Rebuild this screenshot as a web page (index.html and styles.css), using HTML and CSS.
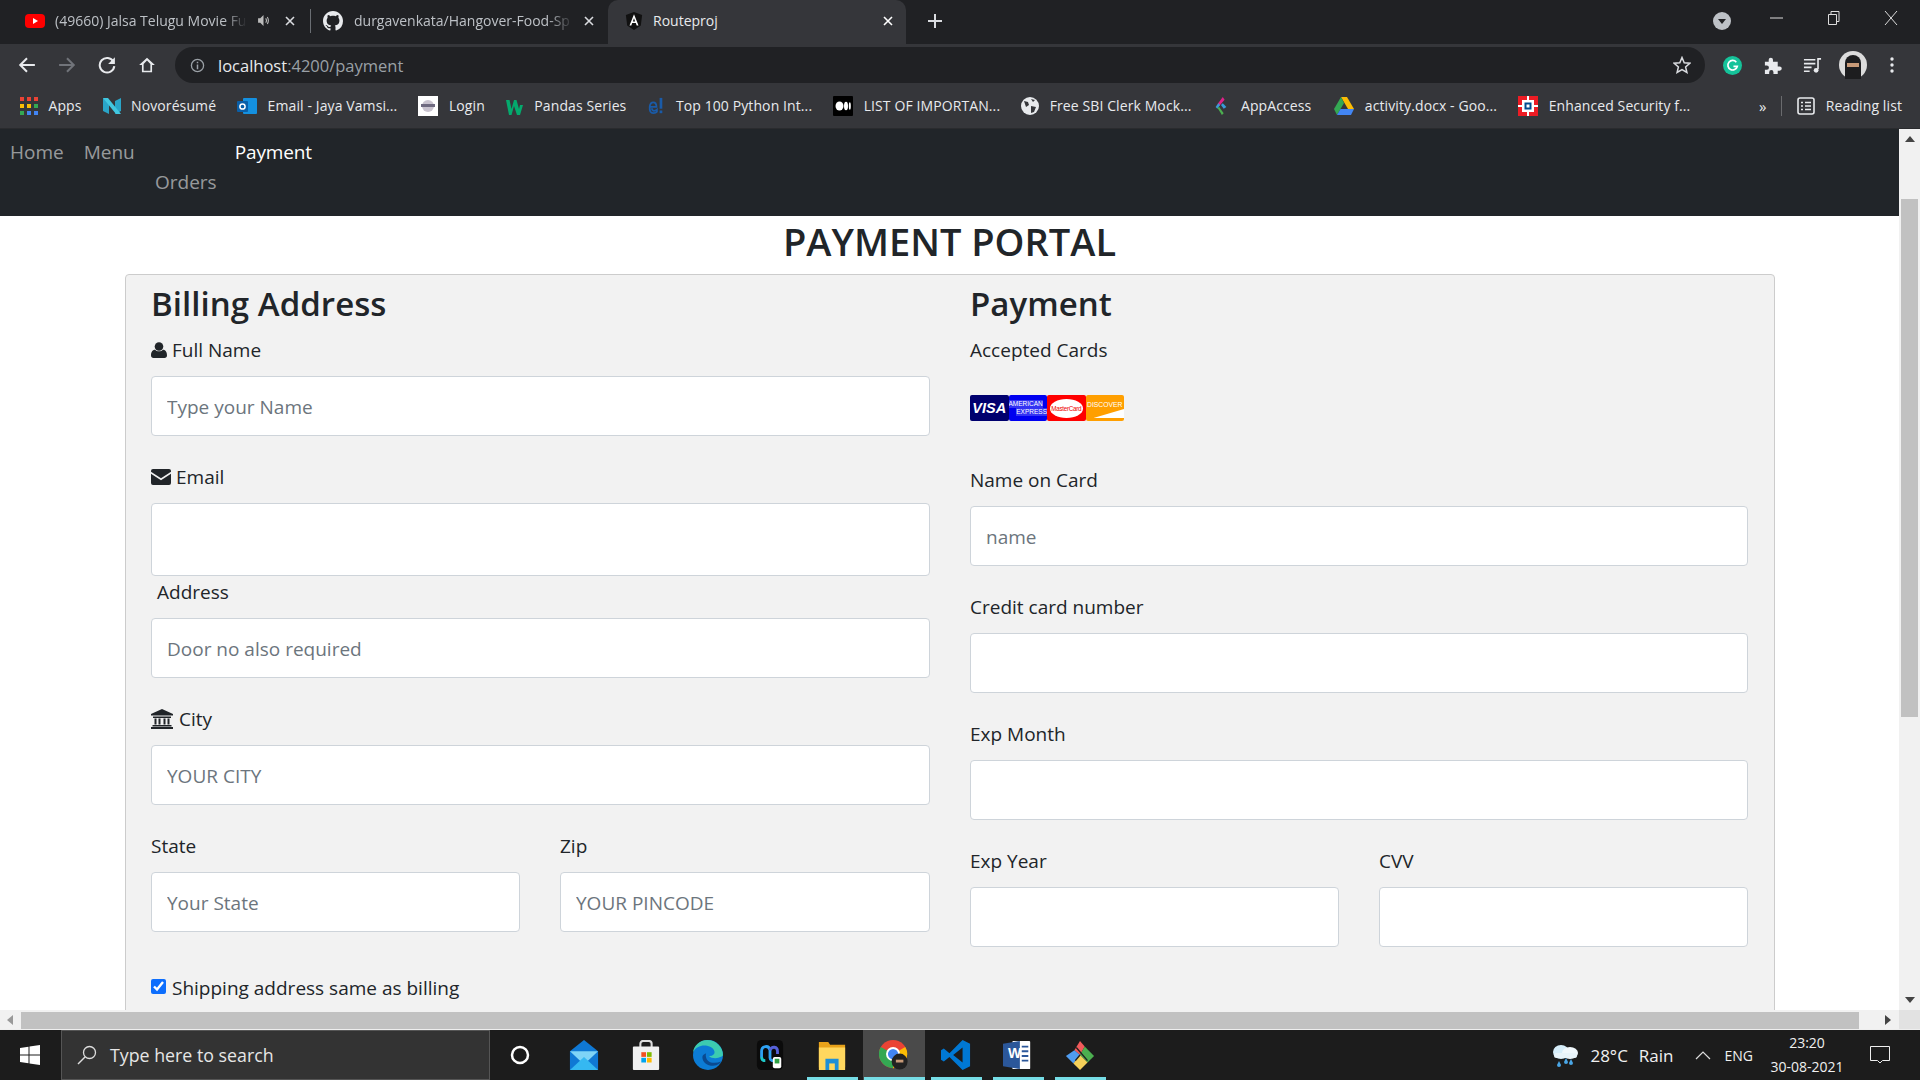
FILE: index.html
```html
<!DOCTYPE html>
<html lang="en">
<head>
<meta charset="utf-8">
<title>Routeproj</title>
<link rel="stylesheet" href="styles.css">
</head>
<body>
<div class="tabstrip">
  <div class="tab tab-yt">
    <svg class="fav" viewBox="0 0 20 20"><rect x="0" y="3" width="20" height="14" rx="4" fill="#f00"/><path d="M8 7l5 3-5 3z" fill="#fff"/></svg>
    <span class="tab-title fade">(49660) Jalsa Telugu Movie Full</span>
    <svg class="speaker" viewBox="0 0 12 12"><path d="M1 4h2l3-3v10L3 8H1z" fill="#bbb"/><path d="M8 4q1.500 2 0 4M9.500 2.800q2 3.200 0 6.400" stroke="#bbb" fill="none"/></svg>
    <svg class="close" viewBox="0 0 10 10"><path d="M1 1l8 8M9 1l-8 8" stroke="#dadce0" stroke-width="1.600"/></svg>
  </div>
  <div class="tab-sep"></div>
  <div class="tab tab-gh">
    <svg class="fav" viewBox="0 0 16 16"><path fill="#e8eaed" d="M8 0C3.580 0 0 3.580 0 8c0 3.540 2.290 6.530 5.470 7.590.4.070.55-.17.55-.38 0-.19-.01-.82-.01-1.490-2.010.37-2.530-.49-2.690-.94-.09-.23-.48-.94-.82-1.130-.28-.15-.68-.52-.01-.53.63-.01 1.080.58 1.230.82.720 1.210 1.870.87 2.330.66.070-.52.280-.87.510-1.070-1.780-.2-3.640-.89-3.640-3.950 0-.87.310-1.590.820-2.150-.08-.2-.36-1.020.08-2.120 0 0 .67-.21 2.200.82.640-.18 1.320-.27 2-.27s1.360.09 2 .27c1.530-1.040 2.200-.82 2.200-.82.440 1.100.16 1.920.08 2.120.51.560.82 1.270.82 2.150 0 3.070-1.870 3.750-3.650 3.950.29.250.54.730.54 1.480 0 1.070-.01 1.930-.01 2.200 0 .21.150.46.550.38A8.010 8.010 0 0 0 16 8c0-4.420-3.580-8-8-8z"/></svg>
    <span class="tab-title fade">durgavenkata/Hangover-Food-Sp</span>
    <svg class="close" viewBox="0 0 10 10"><path d="M1 1l8 8M9 1l-8 8" stroke="#dadce0" stroke-width="1.600"/></svg>
  </div>
  <div class="tab tab-active">
    <svg class="fav" viewBox="0 0 20 20"><path d="M10 0L1 3.300l1.400 11.800L10 20l7.600-4.900L19 3.300z" fill="#111"/><path d="M10 2.500L5 15h2l1-2.700h4l1 2.700h2zM8.700 10.500L10 7l1.300 3.500z" fill="#fff"/></svg>
    <span class="tab-title active-title">Routeproj</span>
    <svg class="close" viewBox="0 0 10 10"><path d="M1 1l8 8M9 1l-8 8" stroke="#fff" stroke-width="1.600"/></svg>
  </div>
  <svg class="newtab" viewBox="0 0 14 14"><path d="M7 0v14M0 7h14" stroke="#dadce0" stroke-width="2"/></svg>
  <div class="spacer"></div>
  <svg class="tabsearch" viewBox="0 0 18 18"><circle cx="9" cy="9" r="9" fill="#bdc1c6"/><path d="M5 7h8l-4 5z" fill="#202124"/></svg>
  <div class="winctl">
    <svg viewBox="0 0 14 14"><path d="M0 7h13" stroke="#ddd"/></svg>
    <svg viewBox="0 0 14 14"><path d="M1.500 3.500h8v10h-8zM4 3.500V.5h8v10H9.500" stroke="#ddd" fill="none"/></svg>
    <svg viewBox="0 0 14 14"><path d="M1 0l12 14M13 0L1 14" stroke="#ddd"/></svg>
  </div>
</div>

<div class="toolbar">
  <div class="navbtns">
    <svg viewBox="0 0 16 16"><path d="M15 8H2M8 2L2 8l6 6" stroke="#e8eaed" stroke-width="1.800" fill="none"/></svg>
    <svg viewBox="0 0 16 16"><path d="M1 8h13M8 2l6 6-6 6" stroke="#71747a" stroke-width="1.800" fill="none"/></svg>
    <svg viewBox="0 0 16 16"><path d="M13.700 5A6.500 6.500 0 1 0 14.500 9" stroke="#e8eaed" stroke-width="1.800" fill="none"/><path d="M15 1v6H9z" fill="#e8eaed"/></svg>
    <svg viewBox="0 0 16 16"><path d="M8 1.500L1 8h2.500v6.500h9V8H15zM5 13V7l3-3 3 3v6z" fill="#e8eaed"/></svg>
  </div>
  <div class="omnibox">
    <svg class="info" viewBox="0 0 16 16"><circle cx="8" cy="8" r="6.500" stroke="#9aa0a6" stroke-width="1.400" fill="none"/><path d="M8 7v5M8 4v1.600" stroke="#9aa0a6" stroke-width="1.600"/></svg>
    <span class="url"><span class="host">localhost</span>:4200/payment</span>
    <svg class="star" viewBox="0 0 18 18"><path d="M9 1.500l2.200 5.200 5.600.5-4.200 3.700 1.300 5.500L9 13.500l-4.900 2.900 1.300-5.500L1.200 7.200l5.600-.5z" stroke="#dadce0" stroke-width="1.500" fill="none"/></svg>
  </div>
  <div class="exts">
    <svg viewBox="0 0 20 20"><circle cx="10" cy="10" r="10" fill="#15c39a"/><path d="M14 6.500A5 5 0 1 0 15 11h-4" stroke="#fff" stroke-width="1.800" fill="none"/></svg>
    <svg viewBox="0 0 20 20"><path d="M2 6h4V4a2.200 2.200 0 0 1 4.500 0v2h5v5h2a2.200 2.200 0 0 1 0 4.500h-2V19H11v-2a2.200 2.200 0 0 0-4.500 0v2H2v-4.500h2a2.200 2.200 0 0 0 0-4.500H2z" fill="#e8eaed"/></svg>
    <svg viewBox="0 0 20 20"><path d="M1 4h12M1 8h12M1 12h8M1 16h6" stroke="#e8eaed" stroke-width="1.700"/><path d="M15 3h4M15.800 3v11" stroke="#e8eaed" stroke-width="1.700"/><circle cx="13.800" cy="15" r="2.500" fill="#e8eaed"/></svg>
    <svg class="avatar" viewBox="0 0 28 28"><circle cx="14" cy="14" r="14" fill="#dcdcdc"/><path d="M6 28V12a8 8 0 0 1 16 0v16z" fill="#1d1d1f"/><rect x="8" y="12" width="12" height="4" fill="#c89a78"/></svg>
    <svg class="dots" viewBox="0 0 4 16"><circle cx="2" cy="2" r="1.700" fill="#e8eaed"/><circle cx="2" cy="8" r="1.700" fill="#e8eaed"/><circle cx="2" cy="14" r="1.700" fill="#e8eaed"/></svg>
  </div>
</div>

<div class="bookmarks">
  <a class="bm bm-apps"><svg viewBox="0 0 18 18"><g fill="#ea4335"><rect width="4" height="4"/><rect x="7" width="4" height="4"/><rect x="14" width="4" height="4"/></g><g fill="#fbbc05"><rect y="7" width="4" height="4"/><rect x="7" y="7" width="4" height="4"/></g><rect x="14" y="7" width="4" height="4" fill="#34a853"/><g fill="#4285f4"><rect x="14" y="14" width="4" height="4"/><rect x="7" y="14" width="4" height="4"/></g><rect y="14" width="4" height="4" fill="#34a853"/></svg>Apps</a>
  <a class="bm bm-nov"><svg viewBox="0 0 18 18"><path d="M0 1l6 3v13l-6-3zM18 1v13l-6 3V4z" fill="#2aa5c8"/><path d="M0 1h5l13 16h-5z" fill="#41c7e0"/></svg>Novorésumé</a>
  <a class="bm bm-mail"><svg class="wide" viewBox="0 0 20 18"><rect x="6" y="1" width="14" height="16" rx="1" fill="#1490df"/><rect x="0" y="4" width="11" height="11" rx="1" fill="#0a5fa8"/><circle cx="5.500" cy="9.500" r="2.600" fill="none" stroke="#fff" stroke-width="1.500"/></svg>Email - Jaya Vamsi...</a>
  <a class="bm bm-login"><svg class="wide" viewBox="0 0 20 20"><rect width="20" height="20" fill="#fff"/><circle cx="10" cy="10" r="6" fill="#c9c3cf"/><rect x="3" y="8" width="14" height="3" fill="#6f6a80"/></svg>Login</a>
  <a class="bm bm-w"><svg viewBox="0 0 18 18"><path d="M0 3h3.500l2 9 2.500-9h2.500l2.500 9 1-4h3l-3 10h-3L8 9l-2.500 9h-2.500z" fill="#04aa6d"/></svg>Pandas Series</a>
  <a class="bm bm-e"><svg viewBox="0 0 16 20"><path d="M1 11h7.500Q8.500 6 5 6t-4 5q-.5 7 4 7 3 0 4-1.500V14q-2 1.600-3.500 1.300Q3.500 15 3.500 12.500" fill="none" stroke="#1a5ba8" stroke-width="2"/><rect x="12" y="1" width="3" height="12" fill="#1a5ba8"/><rect x="12" y="15" width="3" height="3" fill="#1a5ba8"/></svg>Top 100 Python Int...</a>
  <a class="bm bm-med"><svg class="wide" viewBox="0 0 20 20"><rect width="20" height="20" rx="1" fill="#000"/><ellipse cx="6.500" cy="10" rx="4" ry="4.500" fill="#fff"/><ellipse cx="13" cy="10" rx="2" ry="4.300" fill="#fff"/><ellipse cx="16.800" cy="10" rx="1" ry="3.800" fill="#fff"/></svg>LIST OF IMPORTAN...</a>
  <a class="bm bm-globe"><svg viewBox="0 0 18 18"><circle cx="9" cy="9" r="9" fill="#e8eaed"/><path d="M3 4l4 1 1 3-3 2zM10 9l5 1-2 5-3 1zM10 2l4 1-2 2z" fill="#35363a"/></svg>Free SBI Clerk Mock...</a>
  <a class="bm bm-app"><svg viewBox="0 0 14 20"><path d="M9 0L3 8l2 2 6-7z" fill="#e0218a"/><path d="M4 7L1 11l2 2 3-4z" fill="#3a9ad9"/><path d="M9 7l4 4-3 2-3-4z" fill="#3a9ad9"/><path d="M3 12l5 8 2-2-5-7z" fill="#4caf50"/></svg>AppAccess</a>
  <a class="bm bm-drive"><svg class="wide" viewBox="0 0 20 18"><path d="M7 0h6l7 12h-6z" fill="#fbbc05"/><path d="M7 0L0 12l3 6 7-12z" fill="#34a853"/><path d="M3 18h14l3-6H6.500z" fill="#4285f4"/></svg>activity.docx - Goo...</a>
  <a class="bm bm-hdfc"><svg class="wide" viewBox="0 0 20 20"><rect width="20" height="20" fill="#ed1c24"/><path d="M9 0h2v20H9zM0 9h20v2H0z" fill="#fff"/><rect x="4" y="4" width="12" height="12" fill="#fff"/><rect x="6.500" y="6.500" width="7" height="7" fill="#004c8f"/><rect x="8.500" y="8.500" width="3" height="3" fill="#fff"/></svg>Enhanced Security f...</a>
  <div class="spacer"></div>
  <span class="more">»</span>
  <div class="bm-sep"></div>
  <a class="bm reading"><svg viewBox="0 0 18 18"><rect x="1" y="1" width="16" height="16" rx="2" fill="none" stroke="#e8eaed" stroke-width="1.600"/><path d="M4 5.500h2M8 5.500h6M4 9h2M8 9h6M4 12.500h2M8 12.500h6" stroke="#e8eaed" stroke-width="1.500"/></svg>Reading list</a>
</div>

<div class="viewport">
  <main class="page">
    <nav class="navbar">
      <div class="nav-row">
        <a class="nav-link">Home</a>
        <a class="nav-link">Menu</a>
        <a class="nav-link nav-current">Payment</a>
      </div>
      <div class="nav-row nav-row-2"><a class="nav-link">Orders</a></div>
    </nav>
    <h1 class="portal-title">PAYMENT PORTAL</h1>
    <form class="pay-card">
      <section class="col">
        <h3 class="col-title">Billing Address</h3>
        <label class="lbl"><svg class="ico ico-user" viewBox="0 0 16 16"><circle cx="8" cy="4.500" r="4.300"/><path d="M0 13.500C0 9.500 2 7.800 4.200 7.800 5 8.800 6.500 9.300 8 9.300s3-.5 3.800-1.500c2.200 0 4.200 1.700 4.200 5.700 0 1.500-1 2.500-2.500 2.500h-11C1 16 0 15 0 13.500z"/></svg>Full Name</label>
        <input class="inp mb" placeholder="Type your Name">
        <label class="lbl"><svg class="ico ico-env" viewBox="0 0 20 16"><path d="M2 0h16a2 2 0 0 1 2 2v.7L10 9.200 0 2.700V2a2 2 0 0 1 2-2z"/><path d="M0 4.800v9.200a2 2 0 0 0 2 2h16a2 2 0 0 0 2-2V4.800l-10 6.500z"/></svg>Email</label>
        <input class="inp inp-tall">
        <label class="lbl lbl-addr">Address</label>
        <input class="inp mb" placeholder="Door no also required">
        <label class="lbl"><svg class="ico ico-bank" viewBox="0 0 22 20"><path d="M11 0l11 5v1.500H0V5z"/><path d="M2 7.500h18V9H2zM3.500 9.500h2v6h-2zM7.500 9.500h2v6h-2zM12.500 9.500h2v6h-2zM16.500 9.500h2v6h-2zM1.500 16h19v1.500h-19zM0 18h22v2H0z"/></svg>City</label>
        <input class="inp mb" placeholder="YOUR CITY">
        <div class="two">
          <div><label class="lbl">State</label><input class="inp" placeholder="Your State"></div>
          <div><label class="lbl">Zip</label><input class="inp" placeholder="YOUR PINCODE"></div>
        </div>
        <label class="ship"><input class="chk" type="checkbox" checked>Shipping address same as billing</label>
      </section>
      <section class="col">
        <h3 class="col-title">Payment</h3>
        <label class="lbl">Accepted Cards</label>
        <div class="cards">
          <span class="cc cc-visa">VISA</span>
          <span class="cc cc-amex"><span class="amex-a">AMERICAN</span><span class="amex-e">EXPRESS</span></span>
          <span class="cc cc-mc"><span class="mc-disc">MasterCard</span></span>
          <span class="cc cc-disc">DISCOVER</span>
        </div>
        <label class="lbl">Name on Card</label>
        <input class="inp mb" placeholder="name">
        <label class="lbl">Credit card number</label>
        <input class="inp mb">
        <label class="lbl">Exp Month</label>
        <input class="inp mb">
        <div class="two two-right">
          <div><label class="lbl">Exp Year</label><input class="inp"></div>
          <div><label class="lbl">CVV</label><input class="inp"></div>
        </div>
      </section>
    </form>
  </main>
  <div class="vscroll">
    <svg class="arrow" viewBox="0 0 10 6"><path d="M5 0l5 6H0z" fill="#444"/></svg>
    <div class="vthumb"></div>
    <div class="spacer"></div>
    <svg class="arrow" viewBox="0 0 10 6"><path d="M5 6L0 0h10z" fill="#444"/></svg>
  </div>
</div>
<div class="hscroll">
  <svg class="harrow" viewBox="0 0 6 10"><path d="M0 5l6-5v10z" fill="#999"/></svg>
  <div class="hthumb"></div>
  <svg class="harrow" viewBox="0 0 6 10"><path d="M6 5L0 0v10z" fill="#444"/></svg>
  <div class="corner"></div>
</div>

<footer class="taskbar">
  <svg class="start" viewBox="0 0 20 20"><path d="M0 3l8.500-1.200V9.500H0zM9.500 1.600L20 0v9.500H9.500zM0 10.500h8.500v7.700L0 17zM9.500 10.500H20V20L9.500 18.400z" fill="#fff"/></svg>
  <div class="search">
    <svg viewBox="0 0 20 20"><circle cx="12.500" cy="7.500" r="6" fill="none" stroke="#ddd" stroke-width="1.300"/><path d="M8 12l-7 7" stroke="#ddd" stroke-width="1.400"/></svg>
    <span>Type here to search</span>
  </div>
  <div class="tb-apps">
    <div class="tb-app tb-cortana"><svg viewBox="0 0 20 20"><circle cx="10" cy="10" r="8" fill="none" stroke="#fff" stroke-width="2.500"/></svg></div>
    <div class="tb-app tb-mail"><svg viewBox="0 0 30 32"><path d="M15 0L0 12v20h30V12z" fill="#0f78d4"/><path d="M0 12h30L15 26z" fill="#7fd4f7"/><path d="M0 32L15 18l15 14z" fill="#35b8f1"/></svg></div>
    <div class="tb-app"><svg viewBox="0 0 28 32"><path d="M8 8V4a3 3 0 0 1 3-3h6a3 3 0 0 1 3 3v4" fill="none" stroke="#ddd" stroke-width="2.200"/><rect y="7" width="28" height="25" rx="1" fill="#f0f0f0"/><rect x="9" y="13" width="5" height="5" fill="#f25022"/><rect x="15" y="13" width="5" height="5" fill="#7fba00"/><rect x="9" y="19" width="5" height="5" fill="#00a4ef"/><rect x="15" y="19" width="5" height="5" fill="#ffb900"/></svg></div>
    <div class="tb-app"><svg viewBox="0 0 32 32"><circle cx="16" cy="16" r="16" fill="#0c7cd5"/><path d="M32 16C32 8 25 0 15 0 7 0 1 6 0 13c3-6 9-8 15-7 5 1 8 4 8 7 0 2-2 4-5 4h-1c2 2 6 3 10 2 3-1 5-2 5-3z" fill="#3ccbb0"/><path d="M10 18c0 7 8 11 15 9 2-1 4-2 5-4-5 2-11 2-14-1-2-2-3-5-2-8-2 1-4 2-4 4z" fill="#0a4a90"/></svg></div>
    <div class="tb-app"><svg viewBox="0 0 28 32"><rect width="28" height="32" rx="5" fill="#0b0b0b"/><path d="M5 18V12c0-6 8-7 9-1v8c0 3 3 4 5 2" fill="none" stroke="#2ea1f2" stroke-width="3"/><path d="M9 22c-3 0-4-2-4-4" fill="none" stroke="#1fc7c7" stroke-width="3"/><path d="M22 15v-3c0-5-6-6-8-1" fill="none" stroke="#5561d8" stroke-width="3"/><rect x="17" y="18" width="9" height="12" rx="2" fill="#fff"/><rect x="19" y="20" width="5" height="5" fill="#2ea043"/></svg></div>
    <div class="tb-app tb-lined"><svg viewBox="0 0 28 32"><path d="M0 2h10l2 3h16v24H0z" fill="#e8a21a"/><rect y="8" width="28" height="24" fill="#ffd75e"/><rect x="7" y="20" width="14" height="12" fill="#1f8fd6"/><rect x="11" y="25" width="6" height="7" fill="#ffd75e"/></svg></div>
    <div class="tb-app tb-lined tb-active"><svg viewBox="0 0 32 32"><circle cx="15" cy="15" r="15" fill="#ea4335"/><path d="M15 15L28 7.500A15 15 0 0 1 15 30z" fill="#fbbc05"/><path d="M15 15v15A15 15 0 0 1 2 7.500z" fill="#34a853"/><circle cx="15" cy="15" r="6.500" fill="#4285f4" stroke="#fff" stroke-width="2"/><circle cx="22" cy="23" r="8.500" fill="#222"/><rect x="18" y="21" width="8" height="3" fill="#c89a78"/></svg></div>
    <div class="tb-app tb-lined"><svg viewBox="0 0 32 32"><path d="M23 0l8 4v24l-8 4L9 18l-6 5-3-2v-10l3-2 6 5z" fill="#0078d4"/><path d="M23 8L13 16l10 8z" fill="#1c1c1c"/></svg></div>
    <div class="tb-app tb-lined"><svg viewBox="0 0 32 32"><rect x="10" y="1" width="19" height="30" rx="1" fill="#fff"/><path d="M20 7h7M20 12h7M20 17h7M20 22h7" stroke="#2b579a" stroke-width="2"/><path d="M0 4l18-3v30L0 28z" fill="#2b579a"/></svg><span class="word-w">W</span></div>
    <div class="tb-app tb-lined"><svg viewBox="0 0 32 32"><path d="M16 1l5 6-5 9-6-5z" fill="#f05a5a"/><path d="M10 11l6 5-7 9-8-8z" fill="#4f9cf0"/><path d="M21 7l10 10-7 7-8-8z" fill="#4caf50"/><path d="M9 25l7-9 8 8-8 8z" fill="#f5d05a"/><path d="M12 8l12 14M16 16l-5 6" stroke="#222" stroke-width="1.500"/></svg></div>
  </div>
  <div class="spacer"></div>
  <div class="tray">
    <svg class="tray-weather" viewBox="0 0 28 26"><ellipse cx="10" cy="10" rx="8" ry="7" fill="#d6eefa"/><ellipse cx="19" cy="11" rx="8" ry="6" fill="#f0f8fc"/><rect x="3" y="11" width="23" height="5" rx="2.500" fill="#e8f4fa"/><path d="M8 19l-2 4a2 2 0 0 0 4 0zM15 16l-2 4a2 2 0 0 0 4 0zM20 17l-2 4a2 2 0 0 0 4 0z" fill="#4aa6e6"/></svg>
    <span class="t-temp">28°C</span><span class="t-rain">Rain</span>
    <svg class="t-caret" viewBox="0 0 16 9"><path d="M1 8l7-7 7 7" fill="none" stroke="#ddd" stroke-width="1.200"/></svg>
    <span class="t-eng">ENG</span>
    <div class="t-clock"><span>23:20</span><span>30-08-2021</span></div>
    <svg class="t-action" viewBox="0 0 20 20"><path d="M.5 1.500h19v14h-7l-2.500 2.500-2.500-2.500h-7z" fill="none" stroke="#eee"/></svg>
  </div>
</footer>
</body>
</html>
```

FILE: styles.css
```css
* { box-sizing: border-box; }
html, body { margin: 0; height: 100%; }
body {
  width: 1920px; height: 1080px; overflow: hidden;
  display: flex; flex-direction: column;
  font-family: "Open Sans", "Noto Sans", sans-serif;
  color: #212529; background: #fff;
}
svg { display: block; flex: none; }
.spacer { flex: 1; }

/* Tab strip */
.tabstrip { height: 44px; background: #202124; display: flex; align-items: center; flex: none; }
.tab { display: flex; align-items: center; height: 44px; padding-bottom: 3px; color: #bdc1c6; font-size: 14px; }
.fav { width: 20px; height: 20px; }
.tab-title { white-space: nowrap; overflow: hidden; }
.tab-yt { width: 310px; padding-left: 25px; }
.tab-yt .tab-title { width: 192px; margin-left: 10px; }
.fade { -webkit-mask-image: linear-gradient(90deg, #000 88%, transparent); mask-image: linear-gradient(90deg, #000 88%, transparent); }
.speaker { width: 13px; height: 13px; margin-left: 10px; }
.close { width: 10px; height: 10px; }
.tab-yt .close { margin-left: 15px; }
.tab-sep { width: 1px; height: 24px; background: #6a6e73; flex: none; margin-bottom: 3px; }
.tab-gh { width: 297px; padding-left: 12px; }
.tab-gh .tab-title { width: 220px; margin-left: 11px; }
.tab-gh .close { margin-left: 10px; }
.tab-active { width: 298px; padding-left: 17px; background: #35363a; border-radius: 10px 10px 0 0; color: #e8eaed; }
.tab-active .fav { width: 18px; height: 20px; }
.active-title { width: 230px; margin-left: 10px; }
.newtab { width: 14px; height: 14px; margin: 0 0 3px 22px; }
.tabsearch { width: 18px; height: 18px; margin: 0 39px 3px 0; }
.winctl { display: flex; gap: 43px; margin: -8px 22px 0 0; }
.winctl svg { width: 14px; height: 14px; }

/* Toolbar */
.toolbar { height: 42px; background: #35363a; display: flex; align-items: center; flex: none; padding-left: 18px; }
.navbtns { display: flex; gap: 22px; width: 157px; }
.navbtns svg { width: 18px; height: 18px; }
.omnibox { width: 1530px; height: 36px; border-radius: 18px; background: #202124; display: flex; align-items: center; padding: 0 14px 0 15px; }
.info { width: 15px; height: 15px; }
.url { margin-left: 13px; font-size: 16.500px; color: #9aa0a6; flex: 1; }
.host { color: #e8eaed; }
.star { width: 18px; height: 18px; }
.exts { display: flex; align-items: center; margin-left: 18px; }
.exts svg { width: 19px; height: 19px; margin-right: 21px; }
.exts .avatar { width: 28px; height: 28px; margin: 0 23px 0 -4px; }
.exts .dots { width: 4px; height: 16px; margin: 0; }

/* Bookmarks */
.bookmarks { height: 43px; background: #35363a; display: flex; align-items: center; flex: none; padding: 0 18px 3px 20px; gap: 21px; border-bottom: 1px solid #2a2b2e; }
.bm { display: flex; align-items: center; gap: 10.500px; font-size: 14px; color: #e8eaed; white-space: nowrap; letter-spacing: .1px; }
.bm svg { width: 18px; height: 18px; }
.bm svg.wide { width: 20px; height: 20px; }
.bm-drive { margin-left: 2px; }
.more { color: #e8eaed; font-size: 15px; }
.bm-sep { width: 1px; height: 20px; background: #6a6b6e; margin: 0 -6px; }

/* Page viewport */
.viewport { flex: 1; min-height: 0; display: flex; }
.page { flex: 1; min-width: 0; overflow: hidden; }
.navbar { height: 87px; background: #212529; padding: 8px 0 0 10px; font-size: 19px; line-height: 30px; }
.nav-row { display: flex; }
.nav-row-2 { padding-left: 145px; }
.nav-link { color: rgba(255,255,255,.55); margin-right: 20px; }
.nav-current { color: #fff; margin-left: 80px; letter-spacing: -.15px; }
.portal-title { margin: 0; height: 58px; font-size: 38px; font-weight: 600; line-height: 50px; text-align: center; }

.pay-card { margin: 0 124px 0 125px; background: #f2f2f2; border: 1px solid #ccc; border-radius: 4px; padding: 5px 26px 60px 25px; display: grid; grid-template-columns: 779px 778px; column-gap: 40px; }
.col-title { margin: 0 0 7px; height: 47px; font-size: 33px; font-weight: 600; line-height: 47px; letter-spacing: .05px; }
.lbl { display: flex; align-items: center; height: 30px; padding-top: 2px; margin-bottom: 12px; font-size: 19px; }
.inp { display: block; width: 100%; height: 60px; padding: 1px 15px 0; border: 1px solid #ced4da; border-radius: 4px; background: #fff; font: 19px "Open Sans", sans-serif; color: #212529; outline: 0; }
.inp::placeholder { color: #6c757d; opacity: 1; }
.mb { margin-bottom: 25px; }
.inp-tall { height: 73px; margin-bottom: 0; }
.lbl-addr { padding-left: 6px; margin-bottom: 12px; }
.ico { fill: #212529; margin-right: 5px; }
.ico-user { width: 16px; height: 16px; margin-right: 5px; }
.ico-env { width: 20px; height: 16px; }
.ico-bank { width: 22px; height: 20px; margin-right: 6px; }
.two { display: grid; grid-template-columns: 369px 370px; column-gap: 40px; }
.two-right { grid-template-columns: 369px 369px; }
.ship { display: flex; align-items: center; gap: 6px; margin-top: 41px; font-size: 19px; line-height: 30px; }
.chk { width: 15px; height: 15px; margin: -3px 0 0; accent-color: #0d6efd; }

.cards { display: flex; height: 26px; margin: 31px 0 43px; }
.cc { width: 38.500px; height: 26px; border-radius: 2px; display: flex; align-items: center; justify-content: center; color: #fff; font-family: "Liberation Sans", sans-serif; white-space: nowrap; overflow: hidden; text-align: center; position: relative; }
.cc-visa { background: #00006e; font-size: 14.500px; font-weight: 700; font-style: italic; }
.cc-amex { background: #0000f0; font-size: 6.500px; line-height: 8px; flex-direction: column; }
.amex-a { align-self: flex-start; background: rgba(255,255,255,.2); }
.amex-e { align-self: flex-end; background: rgba(255,255,255,.2); }
.cc-mc { background: #f00; }
.mc-disc { width: 33px; height: 19px; border-radius: 50%; background: #fff; color: #e00; font-size: 6.300px; line-height: 19px; letter-spacing: -.3px; }
.cc-disc { background: #ff9f00; font-size: 6.800px; padding-bottom: 8px; }
.cc-disc::after { content: ""; position: absolute; inset: 14px 0 3px 8px; background: #fff; clip-path: polygon(100% 0, 100% 100%, 0 100%); }

/* Scrollbars */
.vscroll { width: 21px; background: #f1f1f1; display: flex; flex-direction: column; align-items: center; flex: none; }
.arrow { width: 10px; height: 6px; margin: 7px 0; }
.vthumb { width: 17px; height: 518px; background: #c1c1c1; margin-top: 50px; }
.hscroll { height: 19px; background: #f1f1f1; display: flex; align-items: center; flex: none; padding-left: 7px; }
.harrow { width: 6px; height: 10px; }
.hthumb { width: 1838px; height: 17px; background: #c1c1c1; margin: 2px 26px 0 8px; }
.corner { width: 21px; height: 19px; background: #e2e2e2; margin-left: 8px; }

/* Taskbar */
.taskbar { height: 51px; background: #1c1c1c; display: flex; align-items: center; flex: none; border-top: 1px solid #eee; padding-left: 20px; color: #f0f0f0; }
.start { width: 20px; height: 20px; }
.search { width: 429px; height: 50px; margin-left: 21px; background: #333; border: 1px solid #555; display: flex; align-items: center; padding-left: 15px; gap: 13px; color: #e6e6e6; font-size: 17.800px; }
.search svg { width: 20px; height: 20px; }
.tb-apps { display: flex; align-self: stretch; }
.tb-app { position: relative; width: 62px; display: flex; align-items: center; justify-content: center; }
.tb-app svg { width: 30px; height: 30px; }
.tb-cortana { width: 60px; }
.tb-cortana svg { width: 20px; height: 20px; }
.tb-mail { width: 65px; padding-left: 3px; }
.tb-lined::after { content: ""; position: absolute; left: 6px; right: 5px; bottom: 0; height: 3px; background: #76dde6; }
.tb-active { background: #4a4a4a; }
.tb-active::after { left: 1px; right: 0; }
.word-w { position: absolute; left: 21px; top: 15px; color: #fff; font-size: 14px; font-weight: 700; font-family: "Liberation Sans", sans-serif; }
.tray { display: flex; align-items: center; font-size: 17px; }
.tray-weather { width: 28px; height: 26px; }
.t-temp { margin-left: 11px; }
.t-rain { margin-left: 11px; }
.t-caret { width: 16px; height: 9px; margin-left: 21px; }
.t-eng { margin-left: 14px; font-size: 14px; }
.t-clock { display: flex; flex-direction: column; align-items: center; width: 76px; margin-left: 16px; font-size: 14px; line-height: 24px; }
.t-action { width: 20px; height: 20px; margin: 0 30px 0 25px; }
```
